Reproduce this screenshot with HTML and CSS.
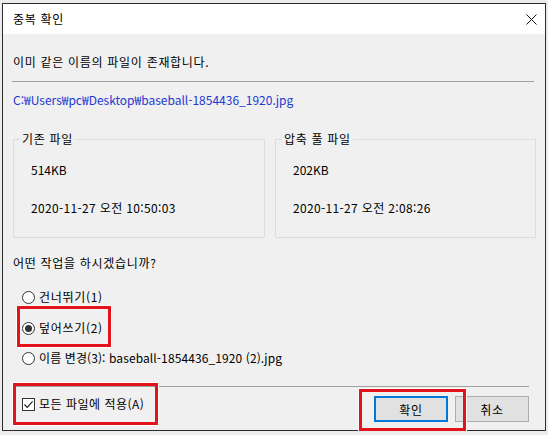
FILE: index.html
```html
<!DOCTYPE html>
<html lang="ko">
<head>
  <meta charset="UTF-8" />
  <meta name="viewport" content="width=device-width, initial-scale=1.0"/>
  <title>중복 확인</title>
  <link rel="stylesheet" href="styles.css">
</head>
<body>

  <div class="dialog">
    <div class="titlebar">
      <span class="title">중복 확인</span>
      <svg class="close" width="11" height="11" viewBox="0 0 11 11">
        <path d="M0.5 0.5 L10.5 10.5 M10.5 0.5 L0.5 10.5" stroke="#111" stroke-width="1" fill="none"/>
      </svg>
    </div>

    <div class="content">
      <div class="message">이미 같은 이름의 파일이 존재합니다.</div>
      <div class="rule"></div>
      <div class="path">C:₩Users₩pc₩Desktop₩baseball-1854436_1920.jpg</div>

      <div class="groups">
        <div class="group left">
          <span class="group-title">기존 파일</span>
          <div class="size">514KB</div>
          <div class="date">2020-11-27 오전 10:50:03</div>
        </div>
        <div class="group right">
          <span class="group-title">압축 풀 파일</span>
          <div class="size">202KB</div>
          <div class="date">2020-11-27 오전 2:08:26</div>
        </div>
      </div>

      <div class="question">어떤 작업을 하시겠습니까?</div>
      <div class="options">
        <label class="option"><span class="radio"></span>건너뛰기(1)</label>
        <label class="option"><span class="radio checked"></span>덮어쓰기(2)</label>
        <label class="option rename"><span class="radio"></span>이름 변경(3): baseball-1854436_1920 (2).jpg</label>
      </div>

      <div class="rule rule-bottom"></div>

      <div class="footer">
        <label class="apply">
          <span class="checkbox">
            <svg width="11" height="11" viewBox="0 0 11 11">
              <path d="M1.5 5.5 L4.2 8.3 L9.6 2.4" stroke="#222" stroke-width="1.2" fill="none"/>
            </svg>
          </span>모든 파일에 적용(A)
        </label>
        <div class="buttons">
          <button class="btn default">확인</button>
          <button class="btn">취소</button>
        </div>
      </div>
    </div>

    <!-- red annotation boxes -->
    <div class="mark mark-overwrite"></div>
    <div class="mark mark-apply"></div>
    <div class="mark mark-confirm"></div>
  </div>

</body>
</html>
```

FILE: styles.css
```css
body {
  margin: 0;
  padding: 3px 0 0 2px;
  background-color: #ececec;
  font-family: "Noto Sans CJK KR", "Noto Sans", sans-serif;
  font-size: 12px;
  letter-spacing: 0.7px;
  color: #000;
}

.dialog {
  position: relative;
  box-sizing: border-box;
  width: 544px;
  height: 428px;
  border: 1px solid #2b2b2b;
  background-color: #f0f0f0;
  display: flex;
  flex-direction: column;
}

.titlebar {
  height: 30px;
  background-color: #fff;
  display: flex;
  align-items: center;
  justify-content: space-between;
  padding: 0 8px 0 10px;
}

.title {
  line-height: 16px;
}

.content {
  padding-left: 10px;
  line-height: 16px;
}

.message {
  margin-top: 20px;
}

.rule {
  width: 522px;
  height: 1px;
  margin: 11px 0 0 -1px;
  background-color: #a0a0a0;
}

.path {
  margin-top: 10px;
  color: #2337d2;
  letter-spacing: 0;
}

.groups {
  display: flex;
  gap: 10px;
  margin-top: 31px;
}

.group {
  box-sizing: border-box;
  height: 99px;
  border: 1px solid #dcdcdc;
}

.group.left {
  width: 252px;
}

.group.right {
  width: 261px;
}

.group-title {
  display: block;
  width: fit-content;
  margin: -9px 0 0 6px;
  padding: 0 2px;
  background-color: #f0f0f0;
}

.size {
  margin-top: 15px;
  padding-left: 17px;
  letter-spacing: 0;
}

.date {
  margin-top: 22px;
  padding-left: 17px;
  letter-spacing: 0.35px;
}

.question {
  margin-top: 17px;
}

.option {
  display: flex;
  align-items: center;
  height: 16px;
  padding-left: 9px;
  margin-top: 15px;
}

.option:first-child {
  margin-top: 18px;
}

.option:last-child {
  margin-top: 14px;
}

.option.rename {
  letter-spacing: 0.1px;
}

.radio {
  box-sizing: border-box;
  width: 13px;
  height: 13px;
  margin-right: 4px;
  border: 1px solid #333;
  border-radius: 50%;
  background-color: #fff;
  display: flex;
  align-items: center;
  justify-content: center;
}

.radio.checked::after {
  content: "";
  width: 7px;
  height: 7px;
  border-radius: 50%;
  background-color: #333;
}

.rule-bottom {
  width: 517px;
  margin-top: 20px;
}

.footer {
  display: flex;
  justify-content: space-between;
  align-items: flex-start;
  margin-top: 9px;
  padding-right: 16px;
}

.apply {
  display: flex;
  align-items: center;
  height: 16px;
  padding-left: 9px;
  letter-spacing: 0.5px;
}

.checkbox {
  box-sizing: border-box;
  width: 13px;
  height: 13px;
  margin-right: 4px;
  border: 1px solid #333;
  background-color: #fff;
  display: flex;
}

.checkbox svg {
  display: block;
}

.buttons {
  display: flex;
  gap: 7px;
}

.btn {
  box-sizing: border-box;
  width: 74px;
  height: 26px;
  padding: 0;
  border: 1px solid #adadad;
  background-color: #e1e1e1;
  font-family: inherit;
  font-size: 12px;
  letter-spacing: 0.7px;
  color: #000;
}

.btn.default {
  border: 2px solid #0078d7;
}

/* red highlight boxes drawn over the dialog */
.mark {
  position: absolute;
  box-sizing: border-box;
  border: 3px solid #e3121b;
  box-shadow: 0 0 0 1px #fff;
}

.mark-overwrite {
  left: 14px;
  top: 302px;
  width: 94px;
  height: 41px;
}

.mark-apply {
  left: 10px;
  top: 379px;
  width: 145px;
  height: 42px;
}

.mark-confirm {
  left: 356px;
  top: 385px;
  width: 107px;
  height: 42px;
}
```
